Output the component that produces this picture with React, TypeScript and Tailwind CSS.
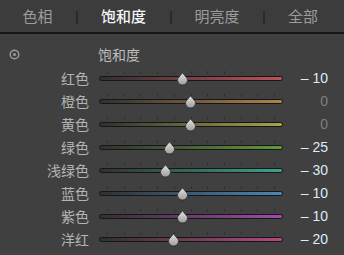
import React from "react";

// ---------------------------------------------------------------------------
// Data
// ---------------------------------------------------------------------------

type Row = { label: string; value: number; color: string };

const ROWS: Row[] = [
  { label: "红色", value: -10, color: "#c0505a" },
  { label: "橙色", value: 0, color: "#b0824a" },
  { label: "黄色", value: 0, color: "#a8a448" },
  { label: "绿色", value: -25, color: "#5f9a3a" },
  { label: "浅绿色", value: -30, color: "#3aa38e" },
  { label: "蓝色", value: -10, color: "#4a86b8" },
  { label: "紫色", value: -10, color: "#a24aac" },
  { label: "洋红", value: -20, color: "#b4497e" },
];

const TICKS = Array.from({ length: 11 }, (_, i) => 8 + i * 16.7);

const FONT = { fontFamily: '"Noto Sans CJK SC", "Liberation Sans", sans-serif' };

// ---------------------------------------------------------------------------
// Pieces
// ---------------------------------------------------------------------------

function Thumb() {
  return (
    <svg width="13" height="14" viewBox="0 0 13 14">
      <defs>
        <linearGradient id="thumbFill" x1="0" y1="0" x2="0" y2="1">
          <stop offset="0" stopColor="#e2e2e2" />
          <stop offset="1" stopColor="#9c9c9c" />
        </linearGradient>
      </defs>
      <path
        d="M6.5 0.8 L11.2 6.4 A5 5 0 1 1 1.8 6.4 Z"
        fill="url(#thumbFill)"
        stroke="#2a2a2a"
        strokeWidth="0.8"
      />
    </svg>
  );
}

function Slider({ value, color }: { value: number; color: string }) {
  // thumb center travels from 8 to 175 inside the 184px wide track box
  const center = 91.5 + (value / 100) * 83.5;
  return (
    <div className="relative w-[184px] h-full">
      {TICKS.map((x) => (
        <span
          key={x}
          className="absolute top-[6px] w-px h-[3px] bg-[#2f2f2f]"
          style={{ left: x }}
        />
      ))}
      <div
        className="absolute top-[11px] left-0 right-0 h-[5px] rounded-full border border-[#161616]"
        style={{ background: `linear-gradient(to right, #303030, ${color})` }}
      />
      <div className="absolute top-[7px]" style={{ left: center - 6.5 }}>
        <Thumb />
      </div>
    </div>
  );
}

// ---------------------------------------------------------------------------
// App
// ---------------------------------------------------------------------------

export default function App() {
  const tabs = [
    { label: "色相", w: "w-[78px]", active: false },
    { label: "饱和度", w: "w-[94px]", active: true },
    { label: "明亮度", w: "w-[93px]", active: false },
    { label: "全部", w: "w-[79px]", active: false },
  ];

  return (
    <div className="w-[344px] h-[255px] bg-[#404040] overflow-hidden" style={FONT}>
      {/* Tab bar */}
      <div className="flex h-[34px] bg-[#3c3c3c] border-b-2 border-[#161616]">
        {tabs.map((t, i) => (
          <div key={t.label} className={`relative flex items-center justify-center ${t.w}`}>
            <span
              className={`text-[15px] pr-[3px] ${
                t.active ? "text-[#f4f4f4] font-medium" : "text-[#9c9c9c]"
              }`}
            >
              {t.label}
            </span>
            {i < 3 && (
              <span className="absolute right-0 top-[11px] w-[2px] h-[13px] bg-[#2a2a2a]" />
            )}
          </div>
        ))}
      </div>

      {/* Header */}
      <div className="flex items-center h-[20px] mt-[10px]">
        <div className="w-[98px] pl-[9px] flex items-center">
          <svg width="11" height="11" viewBox="0 0 11 11">
            <circle cx="5.5" cy="5.5" r="4.3" fill="none" stroke="#9a9a9a" strokeWidth="1.4" />
            <circle cx="5.5" cy="5.5" r="1.5" fill="#9a9a9a" />
          </svg>
        </div>
        <span className="text-[14px] text-[#bdbdbd]">饱和度</span>
      </div>

      {/* Rows */}
      <div className="flex flex-col mt-[1px]">
        {ROWS.map((r) => (
          <div key={r.label} className="flex items-center h-[23px]">
            <span className="w-[89px] text-right text-[14px] text-[#b4b4b4] leading-none pt-[3px]">
              {r.label}
            </span>
            <div className="ml-[10px] h-full">
              <Slider value={r.value} color={r.color} />
            </div>
            <span
              className={`w-[45px] text-right text-[14px] leading-none pt-[3px] ${
                r.value === 0 ? "text-[#7e7e7e]" : "text-[#dcecfb]"
              }`}
              style={{ fontFamily: '"Liberation Sans", sans-serif' }}
            >
              {r.value === 0 ? "0" : `– ${Math.abs(r.value)}`}
            </span>
          </div>
        ))}
      </div>
    </div>
  );
}
